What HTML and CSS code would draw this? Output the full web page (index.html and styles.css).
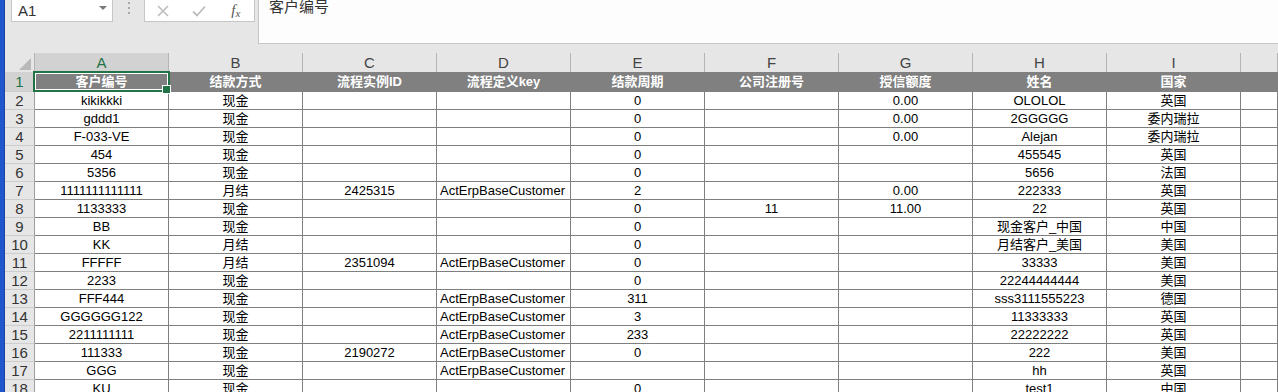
FILE: index.html
```html
<!DOCTYPE html>
<html lang="zh-CN">
<head>
  <meta charset="UTF-8">
  <title>客户列表.xlsx</title>
  <link rel="stylesheet" href="styles.css">
</head>
<body>
  <div class="edge"></div>
  <div class="app">
    <!-- 名称框 + 编辑栏 -->
    <div class="toolbar">
      <div class="namebox">
        <span>A1</span>
        <span class="arrow"></span>
      </div>
      <div class="dots"><span></span><span></span><span></span></div>
      <div class="fxbox">
        <span class="btn">
          <svg width="12" height="12" viewBox="0 0 12 12"><path d="M1 1 L11 11 M11 1 L1 11" stroke="#bdbdbd" stroke-width="1.6" fill="none"/></svg>
        </span>
        <span class="btn">
          <svg width="14" height="12" viewBox="0 0 14 12"><path d="M1 6.5 L5 10.5 L13 1.5" stroke="#bdbdbd" stroke-width="1.8" fill="none"/></svg>
        </span>
        <span class="btn fx"><i>f</i><i class="x">x</i></span>
      </div>
      <div class="formula">客户编号</div>
    </div>

    <!-- 工作表 -->
    <div class="sheet">
      <div class="row colhead">
        <div class="corner">
          <svg width="12" height="12" viewBox="0 0 12 12"><polygon points="12,0 12,12 0,12" fill="#b9b9b9"/></svg>
        </div>
        <div class="c active">A</div>
        <div class="c">B</div>
        <div class="c">C</div>
        <div class="c">D</div>
        <div class="c">E</div>
        <div class="c">F</div>
        <div class="c">G</div>
        <div class="c">H</div>
        <div class="c">I</div>
        <div class="c"></div>
      </div>
      <div id="rows"></div>
    </div>
  </div>

  <script>
// 表格数据（第一行为表头）
const sheetRows = [
  ["客户编号", "结款方式", "流程实例ID", "流程定义key", "结款周期", "公司注册号", "授信额度", "姓名", "国家"],
  ["kikikkki", "现金", "", "", "0", "", "0.00", "OLOLOL", "英国"],
  ["gddd1", "现金", "", "", "0", "", "0.00", "2GGGGG", "委内瑞拉"],
  ["F-033-VE", "现金", "", "", "0", "", "0.00", "Alejan", "委内瑞拉"],
  ["454", "现金", "", "", "0", "", "", "455545", "英国"],
  ["5356", "现金", "", "", "0", "", "", "5656", "法国"],
  ["1111111111111", "月结", "2425315", "ActErpBaseCustomer", "2", "", "0.00", "222333", "英国"],
  ["1133333", "现金", "", "", "0", "11", "11.00", "22", "英国"],
  ["BB", "现金", "", "", "0", "", "", "现金客户_中国", "中国"],
  ["KK", "月结", "", "", "0", "", "", "月结客户_美国", "美国"],
  ["FFFFF", "月结", "2351094", "ActErpBaseCustomer", "0", "", "", "33333", "美国"],
  ["2233", "现金", "", "", "0", "", "", "22244444444", "美国"],
  ["FFF444", "现金", "", "ActErpBaseCustomer", "311", "", "", "sss3111555223", "德国"],
  ["GGGGGG122", "现金", "", "ActErpBaseCustomer", "3", "", "", "11333333", "英国"],
  ["2211111111", "现金", "", "ActErpBaseCustomer", "233", "", "", "22222222", "英国"],
  ["111333", "现金", "2190272", "ActErpBaseCustomer", "0", "", "", "222", "美国"],
  ["GGG", "现金", "", "ActErpBaseCustomer", "", "", "", "hh", "英国"],
  ["KU", "现金", "", "", "0", "", "", "test1", "中国"]
];

const wrap = document.getElementById("rows");
sheetRows.forEach((cells, i) => {
  const row = document.createElement("div");
  row.className = i === 0 ? "row first" : "row data";

  const rh = document.createElement("div");
  rh.className = i === 0 ? "rh active" : "rh";
  rh.textContent = i + 1;
  row.appendChild(rh);

  cells.concat([""]).forEach((val, c) => {
    const cell = document.createElement("div");
    cell.className = "cell";
    // D列(流程定义key)的数据左对齐
    if (i > 0 && c === 3) cell.classList.add("left");
    if (i === 0 && c === 0) cell.classList.add("sel");
    cell.textContent = val;
    row.appendChild(cell);
  });
  wrap.appendChild(row);
});
  </script>
</body>
</html>
```

FILE: styles.css
```css
* {
  margin: 0;
  padding: 0;
  box-sizing: border-box;
}
body {
  font-family: "Liberation Sans", "Noto Sans CJK SC", sans-serif;
  background-color: #e6e6e6;
  color: #000;
  height: 392px;
  overflow: hidden;
  display: flex;
}
.edge {
  width: 5px;
  flex-shrink: 0;
  background-color: #1f56cb;
  border-right: 1px solid #1846a6;
}
.app {
  flex: 1;
  min-width: 0;
}

/* 名称框 / 编辑栏 */
.toolbar {
  display: flex;
  align-items: flex-start;
  height: 44px;
}
.namebox {
  margin-left: 6px;
  width: 102px;
  height: 22px;
  background-color: #fff;
  border: 1px solid #c6c6c6;
  border-top: none;
  display: flex;
  align-items: center;
  padding-left: 6px;
  font-size: 15px;
  color: #333;
}
.namebox .arrow {
  margin-left: auto;
  margin-right: 5px;
  align-self: flex-start;
  margin-top: 6px;
  border-left: 4px solid transparent;
  border-right: 4px solid transparent;
  border-top: 4px solid #7a7a7a;
}
.dots {
  width: 31px;
  display: flex;
  flex-direction: column;
  align-items: center;
  gap: 3px;
  padding-top: 2px;
}
.dots span {
  width: 2px;
  height: 2px;
  background-color: #a8a8a8;
}
.fxbox {
  width: 111px;
  height: 22px;
  background-color: #fff;
  border: 1px solid #c6c6c6;
  border-top: none;
  display: flex;
  align-items: center;
}
.fxbox .btn {
  width: 37px;
  display: flex;
  justify-content: center;
  align-items: center;
}
.fxbox .fx {
  font-family: "Liberation Serif", serif;
  color: #555;
  font-size: 15px;
}
.fxbox .fx .x {
  font-size: 11px;
  margin-top: 4px;
}
.formula {
  flex: 1;
  margin-left: 3px;
  height: 44px;
  background-color: #fdfdfd;
  border-left: 1px solid #c6c6c6;
  border-bottom: 1px solid #c6c6c6;
  padding-left: 10px;
  font-size: 15px;
  line-height: 13px;
  color: #333;
}

/* 工作表 */
.sheet {
  margin-top: 9px;
}
.row {
  display: grid;
  grid-template-columns: 30px repeat(9, 134px) 1fr;
}
.colhead {
  height: 19px;
}
.corner {
  border-right: 1px solid #b4b4b4;
  display: flex;
  justify-content: flex-end;
  align-items: flex-end;
  padding: 0 3px 2px 0;
}
.colhead .c {
  border-right: 1px solid #b4b4b4;
  text-align: center;
  font-size: 15px;
  line-height: 19px;
  color: #444;
}
.colhead .c.active {
  background-color: #d2d2d2;
  color: #217346;
}

.rh {
  background-color: #e6e6e6;
  border-right: 1px solid #9e9e9e;
  border-bottom: 1px solid #cdcdcd;
  text-align: center;
  font-size: 15px;
  color: #333;
}
.rh.active {
  background-color: #d2d2d2;
  color: #217346;
}
.cell {
  border-right: 1px solid #7f7f7f;
  border-bottom: 1px solid #7f7f7f;
  background-color: #fff;
  text-align: center;
  font-size: 13px;
  white-space: nowrap;
  overflow: hidden;
}
.cell.left {
  text-align: left;
  padding-left: 3px;
}
.data {
  height: 18px;
}
.data .rh,
.data .cell {
  line-height: 17px;
}
.first {
  height: 20px;
}
.first .rh,
.first .cell {
  line-height: 19px;
}
.first .cell {
  background-color: #808080;
  border-color: #808080;
  color: #fff;
  font-weight: bold;
  overflow: visible;
}

/* 选中的单元格 A1 */
.cell.sel {
  position: relative;
}
.cell.sel::before {
  content: "";
  position: absolute;
  top: -1px;
  left: -2px;
  right: -2px;
  bottom: -1px;
  border: 2px solid #217346;
  box-shadow: inset 0 0 0 1px #fff;
}
.cell.sel::after {
  content: "";
  position: absolute;
  right: -3px;
  bottom: -3px;
  width: 7px;
  height: 7px;
  background-color: #217346;
  border: 1px solid #fff;
}
```
